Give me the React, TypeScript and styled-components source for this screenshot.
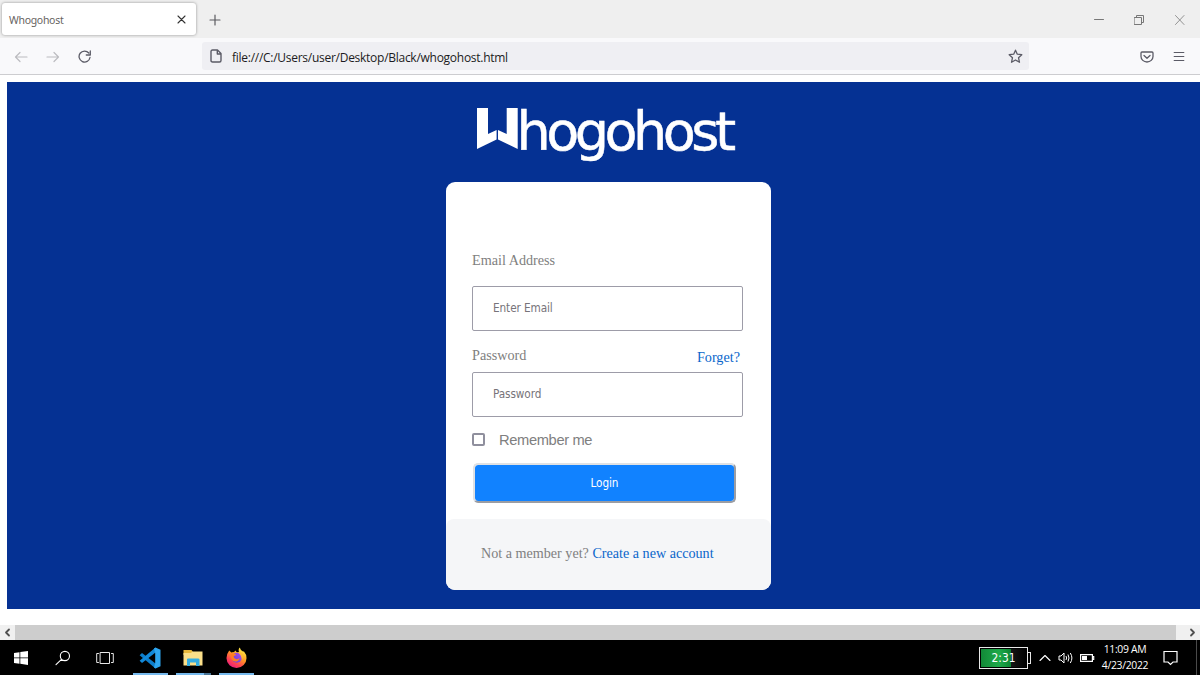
import React from 'react';
import styled, { createGlobalStyle } from 'styled-components';

const Global = createGlobalStyle`
  * { box-sizing: border-box; }
  body { margin: 0; background: #fff; overflow: hidden; }
  svg { display: block; flex: none; }
`;

const Screen = styled.div`
  width: 1200px;
  height: 675px;
  display: flex;
  flex-direction: column;
  overflow: hidden;
  font-family: 'Open Sans', 'Noto Sans', sans-serif;
`;

const TabBar = styled.header`
  height: 38px;
  flex: none;
  display: flex;
  align-items: center;
  background: #efefef;
  padding: 0 15px 0 2px;
`;

const Tab = styled.div`
  width: 194px;
  height: 32px;
  display: flex;
  align-items: center;
  justify-content: space-between;
  padding: 0 9px 0 7px;
  border-radius: 3px;
  background: #fff;
  box-shadow: 0 0 3px rgba(0, 0, 0, 0.4);
  color: #67645f;
`;

const TabTitle = styled.span`
  font: 10.5px/16px 'Noto Sans', sans-serif;
  letter-spacing: -0.3px;
  padding-top: 2px;
`;

const NewTab = styled.div`
  margin: 2px auto 0 13px;
`;

const WindowButtons = styled.div`
  display: flex;
  align-items: center;
  gap: 30px;
  padding-top: 1px;
`;

const Toolbar = styled.nav`
  height: 37px;
  flex: none;
  display: flex;
  align-items: center;
  padding: 0 14px;
  background: #f9f9fb;
  border-bottom: 1px solid #cdcdd0;
`;

const NavButtons = styled.div`
  display: flex;
  align-items: center;
  gap: 18px;
  width: 188px;
  padding-top: 2px;
`;

const AddressBar = styled.div`
  width: 827px;
  height: 28px;
  display: flex;
  align-items: center;
  padding: 0 6px 0 8px;
  border-radius: 3px;
  background: #efeff3;
`;

const Url = styled.span`
  flex: 1;
  margin-left: 10px;
  padding-top: 3px;
  font-size: 12px;
  line-height: 18px;
  letter-spacing: -0.27px;
  color: #1c1b22;
`;

const ToolIcons = styled.div`
  margin-left: auto;
  display: flex;
  align-items: center;
  gap: 18px;
  padding-top: 1px;
`;

const Viewport = styled.main`
  height: 550px;
  flex: none;
  padding: 7px 0 0 7px;
  background: #fff;
`;

const Page = styled.div`
  height: 527px;
  background: #053193;
  padding: 10px 0 0 439px;
`;

const Logo = styled.svg`
  margin-left: 24px;
`;

const Card = styled.section`
  width: 325px;
  height: 408px;
  display: flex;
  flex-direction: column;
  border-radius: 9px;
  background: #fff;
  overflow: hidden;
`;

const Form = styled.form`
  height: 337px;
  padding: 69px 28px 0 26px;
  font-family: 'Liberation Serif', serif;
  font-size: 14.2px;
  color: #808080;
`;

const Label = styled.label`
  display: block;
  line-height: 18px;
`;

const Input = styled.input<{ $top: number }>`
  display: block;
  width: 271px;
  height: 45px;
  margin: ${(p) => p.$top}px 0 0;
  padding: 0 20px 1px 20px;
  border: 1px solid #9d9ca8;
  border-radius: 2px;
  outline: none;
  background: #fff;
  font: 11.7px 'DejaVu Sans Condensed', 'Noto Sans', sans-serif;
  letter-spacing: -0.1px;
  &::placeholder { color: #77747a; opacity: 1; }
`;

const PasswordRow = styled.div`
  display: flex;
  justify-content: space-between;
  margin-top: 15px;
  padding-right: 3px;
`;

const Link = styled.a<{ $drop?: number }>`
  color: #0a66cb;
  line-height: 18px;
  padding-top: ${(p) => p.$drop ?? 0}px;
`;

const Remember = styled.label`
  display: flex;
  align-items: center;
  gap: 14px;
  height: 20px;
  margin-top: 13px;
  font: 14.7px/20px 'Liberation Sans', sans-serif;
  letter-spacing: -0.36px;
`;

const Check = styled.input`
  appearance: none;
  width: 13px;
  height: 13px;
  margin: 0 0 1px;
  border: 2px solid #8f8f9d;
  border-radius: 2px;
  background: #fff;
`;

const Login = styled.button`
  display: block;
  width: 263px;
  height: 40px;
  margin: 13px 0 0 1px;
  padding: 0;
  border: 2px solid;
  border-color: #dfe1e4 #9b9da3 #9b9da3 #dfe1e4;
  border-radius: 5px;
  background: #1182ff;
  background-clip: padding-box;
  color: #fff;
  font: 11.7px 'DejaVu Sans Condensed', 'Noto Sans', sans-serif;
  letter-spacing: -0.1px;
`;

const CardFooter = styled.footer`
  flex: 1;
  padding: 25px 0 0 35px;
  border-radius: 8px 8px 0 0;
  background: #f5f6f8;
  font: 14.13px/18px 'Liberation Serif', serif;
  color: #808080;
`;

const ScrollBar = styled.div`
  height: 15px;
  flex: none;
  display: flex;
  background: #f0f0f0;
`;

const ScrollArrow = styled.div<{ $w: number }>`
  width: ${(p) => p.$w}px;
  display: flex;
  align-items: center;
  justify-content: ${(p) => (p.$w > 20 ? 'flex-end' : 'center')};
  padding-right: ${(p) => (p.$w > 20 ? 4 : 1)}px;
`;

const Thumb = styled.div`
  flex: 1;
  background: #cdcdcd;
`;

const TaskBar = styled.footer`
  height: 35px;
  flex: none;
  display: flex;
  background: #000;
`;

const TaskItem = styled.div<{ $line?: string; $shift?: number }>`
  width: 35px;
  height: 35px;
  margin-right: 8px;
  padding: 0 ${(p) => p.$shift ?? 2}px 0 0;
  display: flex;
  align-items: center;
  justify-content: center;
  background: ${(p) => p.$line ?? 'none'} bottom / 100% 2px no-repeat;
`;

const TaskItems = styled.div`
  display: flex;
  padding-left: 4px;
`;

const Tray = styled.div`
  margin-left: auto;
  display: flex;
  align-items: center;
`;

const Battery = styled.div`
  width: 49px;
  height: 22px;
  padding: 1px;
  border: 1px solid #e8e8e8;
`;

const Charge = styled.div`
  height: 100%;
  background: linear-gradient(90deg, #128837 0, #1eaa4a 18px, #0c8632 30px, #161616 30px, #000 100%);
  color: #fff;
  text-align: center;
  font: 11.8px/19px 'DejaVu Sans Condensed', 'Noto Sans', sans-serif;
`;

const BatteryTip = styled.div`
  width: 3px;
  height: 12px;
  border: 1px solid #e8e8e8;
  border-left: 0;
  margin-right: 8px;
`;

const Volume = styled.svg`
  margin: 0 6px 0 7px;
`;

const Clock = styled.div`
  width: 60px;
  padding-bottom: 1px;
  text-align: center;
  color: #fff;
  font-size: 10.4px;
  line-height: 16px;
  letter-spacing: -0.3px;
  white-space: nowrap;
`;

const Notifications = styled.svg`
  margin: 0 18px 0 8px;
`;

const ShowDesktop = styled.div`
  width: 4px;
  height: 35px;
  border-left: 1px solid #4a4a4a;
`;

const Stroke = ({ w, h, d, c = '#5b5b66', s = 1.2 }: { w: number; h: number; d: string; c?: string; s?: number }) => (
  <svg width={w} height={h} viewBox={`0 0 ${w} ${h}`} fill="none" stroke={c} strokeWidth={s} strokeLinecap="round" strokeLinejoin="round">
    <path d={d} />
  </svg>
);

const Firefox = () => (
  <svg width="21" height="21" viewBox="0 0 21 21">
    <defs>
      <linearGradient id="fire" x1="0.8" y1="0.05" x2="0.2" y2="1">
        <stop offset="0" stopColor="#fff04a" />
        <stop offset="0.4" stopColor="#ff9a22" />
        <stop offset="0.7" stopColor="#ff4550" />
        <stop offset="1" stopColor="#e31587" />
      </linearGradient>
      <linearGradient id="globe" x1="1" y1="0" x2="0" y2="1">
        <stop offset="0" stopColor="#b04bea" />
        <stop offset="1" stopColor="#5a42d8" />
      </linearGradient>
    </defs>
    <path fill="url(#fire)" d="M3.2 3.4 5.4 5.5Q6.800 4.900 8 5.200 8.300 4.200 10 3.400 9.600 5 11.200 5.300L13 5Q12 2 13.700 .4 14.500 3.200 17 4.600L18 4.500Q20.500 7.300 20.500 11A10 9.800 0 0 1 .5 11.300Q.4 7 3.200 3.400Z" />
    <circle cx="10.800" cy="10.700" r="5" fill="url(#globe)" />
    <path fill="#ff7d24" d="M4.500 7.400Q7 5.700 10.200 7.600 9.800 9 7.700 9.100 7.300 11.200 9.800 12 12 12.500 13.800 11 12.600 14.700 9 14.600 4.700 13.700 4.500 7.400Z" />
    <path fill="#ffbd35" d="M14 5.200Q18.200 8 16 13 15.700 8.500 12.500 6Z" />
  </svg>
);

const solidLine = 'linear-gradient(#76b9ed, #76b9ed)';
const splitLine = 'linear-gradient(90deg, #76b9ed 28px, #4a7596 28px)';

export default function App() {
  return (
    <Screen>
      <Global />
      <TabBar>
        <Tab>
          <TabTitle>Whogohost</TabTitle>
          <Stroke w={11} h={11} d="M2 2 9 9M9 2 2 9" c="#333" s={1.1} />
        </Tab>
        <NewTab>
          <Stroke w={12} h={12} d="M6 1V11M1 6H11" c="#5b5b60" />
        </NewTab>
        <WindowButtons>
          <Stroke w={11} h={10} d="M1.500 4.500H10.500" c="#777" s={1} />
          <Stroke w={10} h={10} d="M.5 2.500H7.500V9.500H.5ZM2.500 2.500V.5H9.500V7.500H7.500" c="#777" s={1} />
          <Stroke w={11} h={10} d="M1.500.5 10 9.500M10 .5 1.500 9.500" c="#888" s={0.9} />
        </WindowButtons>
      </TabBar>
      <Toolbar>
        <NavButtons>
          <Stroke w={14} h={12} d="M13 6H1.500M6 1.500 1.500 6 6 10.500" c="#bcbcc0" />
          <Stroke w={14} h={12} d="M1 6H12.500M8 1.500 12.500 6 8 10.500" c="#bcbcc0" />
          <Stroke w={14} h={14} d="M10.800 3A5.500 5.500 0 1 0 12 7.500M12.300 1V5H8.300" s={1.3} />
        </NavButtons>
        <AddressBar>
          <Stroke w={12} h={14} d="M2.500 1H7.500L11 4.500V11.500Q11 13 9.500 13H2.500Q1 13 1 11.500V2.500Q1 1 2.500 1ZM7.300 1V5H11" s={1.4} />
          <Url>file:///C:/Users/user/Desktop/Black/whogohost.html</Url>
          <Stroke w={15} h={15} d="M7.500 1.200 9.300 5.200 13.800 5.700 10.500 8.700 11.500 13.300 7.500 11 3.500 13.300 4.500 8.700 1.200 5.700 5.700 5.200Z" s={1.3} />
        </AddressBar>
        <ToolIcons>
          <Stroke w={14} h={12} d="M2 1H12Q13 1 13 2V5.500A6 5.500 0 0 1 1 5.500V2Q1 1 2 1ZM4 4.500 7 7.300 10 4.500" s={1.3} />
          <Stroke w={14} h={12} d="M2.200 1.500H11.800M2.200 5.500H11.800M2.200 9.500H11.800" s={1.2} />
        </ToolIcons>
      </Toolbar>
      <Viewport>
        <Page>
          <Logo width="290" height="90" viewBox="470 92 290 90">
            <path fill="#fff" d="M477 108H488V134L496.600 130V139.500L477 149ZM506.700 108H517.700V149L498 139.500V130L506.700 134Z" />
            <text x="516.500" y="149.500" fill="#fff" stroke="#fff" strokeWidth="0.500" fontFamily="'DejaVu Sans', sans-serif" fontSize="54" letterSpacing="-4.500">hogohost</text>
          </Logo>
          <Card>
            <Form>
              <Label>Email Address</Label>
              <Input $top={17} placeholder="Enter Email" />
              <PasswordRow>
                <Label>Password</Label>
                <Link $drop={2}>Forget?</Link>
              </PasswordRow>
              <Input $top={6} placeholder="Password" />
              <Remember>
                <Check type="checkbox" />
                Remember me
              </Remember>
              <Login type="button">Login</Login>
            </Form>
            <CardFooter>
              Not a member yet? <Link>Create a new account</Link>
            </CardFooter>
          </Card>
        </Page>
      </Viewport>
      <ScrollBar>
        <ScrollArrow $w={15}>
          <Stroke w={7} h={9} d="M5 1.500 2 4.500 5 7.500" c="#505050" s={1.8} />
        </ScrollArrow>
        <Thumb />
        <ScrollArrow $w={24}>
          <Stroke w={7} h={9} d="M2 1.500 5 4.500 2 7.500" c="#505050" s={1.8} />
        </ScrollArrow>
      </ScrollBar>
      <TaskBar>
        <TaskItems>
          <TaskItem>
            <svg width="14" height="14" viewBox="0 0 14 14" fill="#fff">
              <path d="M0 2 5.500 1.200V6.500H0ZM6.300 1.100 14 0V6.500H6.300ZM0 7.300H5.500V12.700L0 11.900ZM6.300 7.300H14V14L6.300 12.800Z" />
            </svg>
          </TaskItem>
          <TaskItem $shift={3}>
            <Stroke w={16} h={16} d="M14.500 6A4.600 4.600 0 1 1 5.300 6 4.600 4.600 0 1 1 14.500 6ZM6.500 9.300 1 14.700" c="#fff" s={1.1} />
          </TaskItem>
          <TaskItem $shift={5}>
            <Stroke w={18} h={14} d="M4.500 1.500H13.500V12.500H4.500ZM2.500 2.500H.7V11.500H2.500M15.500 2.500H17.300V11.500H15.500" c="#e8e8e8" s={1} />
          </TaskItem>
          <TaskItem $line={solidLine} $shift={1}>
            <svg width="22" height="22" viewBox="0 0 22 22">
              <path fill="#0d7dca" d="M3 6 16.500 16.500V21.500L.6 8.300Z" />
              <path fill="#1289d8" d="M3 16 16.500 5.500V.5L.6 13.700Z" />
              <path fill="#2ea6ef" d="M16.500.5 21.500 2.800V19.200L16.500 21.500 15 20.500 16.200 16V6L15 1.500Z" />
            </svg>
          </TaskItem>
          <TaskItem $line={splitLine} $shift={1}>
            <svg width="20" height="18" viewBox="0 0 20 18">
              <path fill="#e9b93c" d="M.5 1H8.500L10 3H19V6H.5Z" />
              <path fill="#fbe08a" d="M.5 4H8L9.500 2.500H19.500V16.500H.5Z" />
              <path fill="#36aee2" d="M4 10.500Q4 9.500 5 9.500H15Q16.500 9.500 16.500 10.500V17H13V13.500H7V17H4Z" />
            </svg>
          </TaskItem>
          <TaskItem $line={solidLine} $shift={0}>
            <Firefox />
          </TaskItem>
        </TaskItems>
        <Tray>
          <Battery><Charge>2:31</Charge></Battery>
          <BatteryTip />
          <Stroke w={12} h={8} d="M1 6.500 6 1.500 11 6.500" c="#fff" s={1.1} />
          <Volume width="16" height="14" viewBox="0 0 16 14" fill="none" stroke="#fff">
            <path d="M1 5H3L6 2V12L3 9H1ZM8 5Q9.200 7 8 9M10 3.500Q12 7 10 10.500M12.300 2Q15.500 7 12.300 12" />
          </Volume>
          <svg width="15" height="10" viewBox="0 0 15 10" fill="none" stroke="#fff" strokeWidth="1.200">
            <path d="M.6 1.600H12.400V8.400H.6ZM12.400 3.500H13.700V6.500H12.400" />
            <path fill="#fff" stroke="none" d="M2 3H7V7H2Z" />
          </svg>
          <Clock>11:09 AM<br />4/23/2022</Clock>
          <Notifications width="15" height="16" viewBox="0 0 15 16" fill="none" stroke="#fff" strokeWidth="1.200">
            <path d="M1 1.500H14V12H10L7.500 14.500 5 12H1Z" />
          </Notifications>
          <ShowDesktop />
        </Tray>
      </TaskBar>
    </Screen>
  );
}
